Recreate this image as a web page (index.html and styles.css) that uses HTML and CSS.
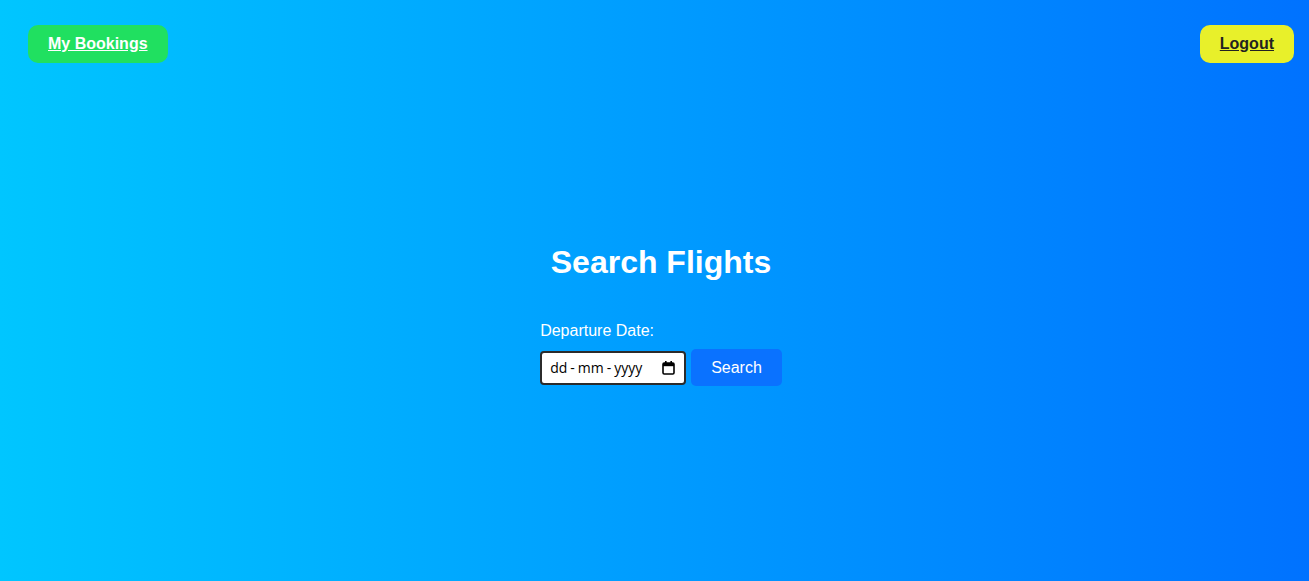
FILE: index.html
```html
<!DOCTYPE html>
<html>
<head>
<meta charset="utf-8">
<link rel="stylesheet" href="styles.css">
</head>
<body>
<header class="topbar">
  <a class="btn btn-green" href="#">My Bookings</a>
  <a class="btn btn-yellow" href="#">Logout</a>
</header>
<main class="main">
  <div class="search-box">
    <h1 class="title">Search Flights</h1>
    <form class="search-form">
      <label class="label" for="date">Departure Date:</label>
      <div class="row">
        <div class="date-field" id="date" tabindex="0">
          <span class="date-text"><span>dd</span><span class="sep">-</span><span>mm</span><span class="sep">-</span><span>yyyy</span></span>
          <svg class="cal" width="13" height="14" viewBox="0 0 13 14" aria-hidden="true">
            <rect x="3" y="0" width="1.6" height="3" fill="#000"/>
            <rect x="8.4" y="0" width="1.6" height="3" fill="#000"/>
            <rect x="1" y="2" width="11" height="11" rx="1.2" fill="none" stroke="#000" stroke-width="1.6"/>
            <rect x="1" y="2" width="11" height="3.2" fill="#000"/>
          </svg>
        </div>
        <button class="search-btn" type="button">Search</button>
      </div>
    </form>
  </div>
</main>
</body>
</html>
```
FILE: styles.css
```css
html, body {
  margin: 0;
  height: 100%;
}
body {
  background: linear-gradient(to right, #00c6ff, #0072ff);
  font-family: "Liberation Sans", Arial, sans-serif;
  color: #fff;
  display: flex;
  flex-direction: column;
}
.topbar {
  display: flex;
  justify-content: space-between;
  padding: 25px 15px 0 28px;
}
.btn {
  display: inline-block;
  padding: 10px 20px;
  border-radius: 10px;
  font-weight: bold;
  font-size: 16px;
  line-height: 18px;
  text-decoration: underline;
}
.btn-green {
  background: #20e060;
  color: #fff;
}
.btn-yellow {
  background: #e8f02a;
  color: #222;
}
.main {
  display: flex;
  justify-content: center;
  padding-left: 13px;
  padding-top: 181px;
}
.search-box {
  display: flex;
  flex-direction: column;
  align-items: center;
}
.title {
  font-size: 32px;
  line-height: 37px;
  margin: 0 0 41px;
}
.search-form {
  display: flex;
  flex-direction: column;
}
.label {
  font-size: 16px;
  line-height: 18px;
  margin-bottom: 9px;
}
.row {
  display: flex;
  align-items: flex-start;
  gap: 5px;
}
.date-field {
  width: 146px;
  height: 34px;
  margin-top: 1.5px;
  box-sizing: border-box;
  border: 2px solid #2b2b2b;
  border-radius: 4px;
  padding: 0 9px 0 8px;
  background: #fff;
  color: #000;
  display: flex;
  align-items: center;
  justify-content: space-between;
  font-family: "Open Sans", "Noto Sans", sans-serif;
  font-size: 14px;
}
.date-text {
  display: flex;
  align-items: center;
}
.sep {
  margin: 0 3px;
}
.cal {
  display: block;
}
.search-btn {
  background: #0a72ff;
  color: #fff;
  border: none;
  border-radius: 5px;
  padding: 10px 20px;
  font-family: "Liberation Sans", Arial, sans-serif;
  font-size: 16px;
  line-height: 17px;
}
```
